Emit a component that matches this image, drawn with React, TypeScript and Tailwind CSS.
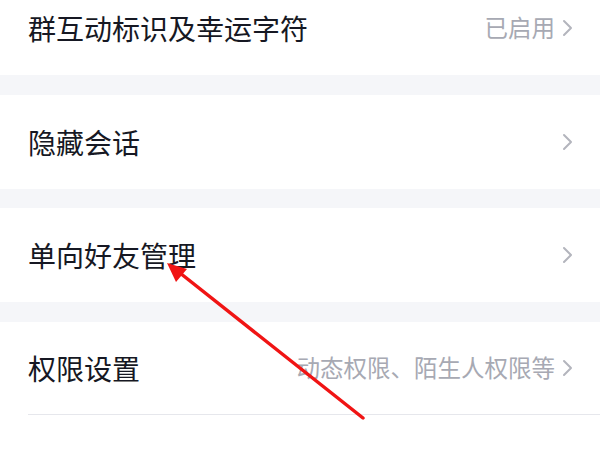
import React from 'react';

const rows = [
    { label: '群互动标识及幸运字符', value: '已启用', h: 'h-[94px] -mt-[19px]' },
    { label: '隐藏会话', value: '', h: 'h-[94px]' },
    { label: '单向好友管理', value: '', h: 'h-[94px]', gap: 'h-[19px]' },
    { label: '权限设置', value: '动态权限、陌生人权限等', h: 'h-[92px]', divider: true },
];

function Chevron() {
    return (
        <svg width="14" height="18" viewBox="0 0 14 18" className="ml-[5px] shrink-0">
            <path d="M4 2 L11 9 L4 16" fill="none" stroke="#b3b5bd" strokeWidth="2" strokeLinecap="round" strokeLinejoin="round" />
        </svg>
    );
}

export default function App() {
    return (
        <div className="relative w-[600px] h-[450px] overflow-hidden bg-white" style={{ fontFamily: '"Noto Sans CJK SC", "Noto Sans", sans-serif' }}>
            {rows.map((r, i) => (
                <div key={r.label}>
                    {i > 0 && <div className={`${r.gap ?? 'h-[20px]'} bg-[#f5f6f9]`} />}
                    <div className={`${r.h} flex items-center pl-[28px] pr-[26px]`}>
                        <span className="flex-1 text-[28px] leading-none text-[#161823]">{r.label}</span>
                        {r.value && <span className="text-[23.5px] leading-none text-[#a7a9b3]">{r.value}</span>}
                        <Chevron />
                    </div>
                    {r.divider && <div className="ml-[28px] h-px bg-[#e6e7ec]" />}
                </div>
            ))}
            <svg className="absolute inset-0 pointer-events-none" width="600" height="450">
                <line x1="363" y1="418" x2="180" y2="273" stroke="#f01414" strokeWidth="3.5" strokeLinecap="round" />
                <polygon points="167,263 187,269 176,282" fill="#f01414" />
            </svg>
        </div>
    );
}
